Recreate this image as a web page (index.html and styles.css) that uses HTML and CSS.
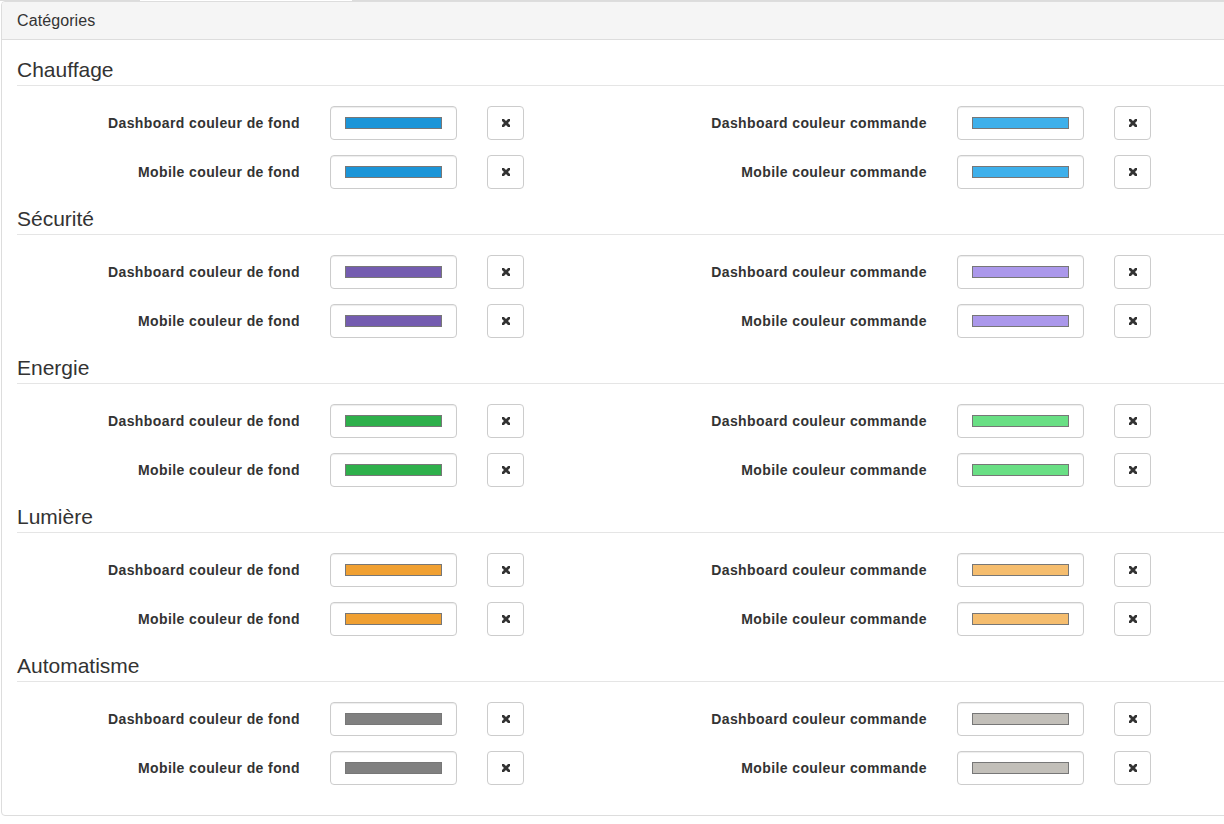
FILE: index.html
```html
<!DOCTYPE html>
<html lang="fr">
<head>
<meta charset="utf-8">
<title>Catégories</title>
<link rel="stylesheet" href="styles.css">
</head>
<body>
<div class="topbar"><span class="tab"></span></div>
<div class="panel">
  <div class="panel-heading">Catégories</div>
  <div class="panel-body">

    <section class="cat">
      <div class="legend">Chauffage</div>
      <div class="grid">
        <label class="lbl">Dashboard couleur de fond</label>
        <div class="cell"><span class="color"><span class="swatch" style="background:#1b95d8"></span></span></div>
        <div class="cell"><button class="btn"><svg viewBox="0 0 8 8" width="8" height="8"><path d="M1 1L7 7M7 1L1 7"/></svg></button></div>
        <label class="lbl">Dashboard couleur commande</label>
        <div class="cell"><span class="color"><span class="swatch" style="background:#3eb0eb"></span></span></div>
        <div class="cell"><button class="btn"><svg viewBox="0 0 8 8" width="8" height="8"><path d="M1 1L7 7M7 1L1 7"/></svg></button></div>
        <label class="lbl">Mobile couleur de fond</label>
        <div class="cell"><span class="color"><span class="swatch" style="background:#1b95d8"></span></span></div>
        <div class="cell"><button class="btn"><svg viewBox="0 0 8 8" width="8" height="8"><path d="M1 1L7 7M7 1L1 7"/></svg></button></div>
        <label class="lbl">Mobile couleur commande</label>
        <div class="cell"><span class="color"><span class="swatch" style="background:#3eb0eb"></span></span></div>
        <div class="cell"><button class="btn"><svg viewBox="0 0 8 8" width="8" height="8"><path d="M1 1L7 7M7 1L1 7"/></svg></button></div>
      </div>
    </section>

    <section class="cat">
      <div class="legend">Sécurité</div>
      <div class="grid">
        <label class="lbl">Dashboard couleur de fond</label>
        <div class="cell"><span class="color"><span class="swatch" style="background:#745cb0"></span></span></div>
        <div class="cell"><button class="btn"><svg viewBox="0 0 8 8" width="8" height="8"><path d="M1 1L7 7M7 1L1 7"/></svg></button></div>
        <label class="lbl">Dashboard couleur commande</label>
        <div class="cell"><span class="color"><span class="swatch" style="background:#ab98eb"></span></span></div>
        <div class="cell"><button class="btn"><svg viewBox="0 0 8 8" width="8" height="8"><path d="M1 1L7 7M7 1L1 7"/></svg></button></div>
        <label class="lbl">Mobile couleur de fond</label>
        <div class="cell"><span class="color"><span class="swatch" style="background:#745cb0"></span></span></div>
        <div class="cell"><button class="btn"><svg viewBox="0 0 8 8" width="8" height="8"><path d="M1 1L7 7M7 1L1 7"/></svg></button></div>
        <label class="lbl">Mobile couleur commande</label>
        <div class="cell"><span class="color"><span class="swatch" style="background:#ab98eb"></span></span></div>
        <div class="cell"><button class="btn"><svg viewBox="0 0 8 8" width="8" height="8"><path d="M1 1L7 7M7 1L1 7"/></svg></button></div>
      </div>
    </section>

    <section class="cat">
      <div class="legend">Energie</div>
      <div class="grid">
        <label class="lbl">Dashboard couleur de fond</label>
        <div class="cell"><span class="color"><span class="swatch" style="background:#2eb04b"></span></span></div>
        <div class="cell"><button class="btn"><svg viewBox="0 0 8 8" width="8" height="8"><path d="M1 1L7 7M7 1L1 7"/></svg></button></div>
        <label class="lbl">Dashboard couleur commande</label>
        <div class="cell"><span class="color"><span class="swatch" style="background:#69df84"></span></span></div>
        <div class="cell"><button class="btn"><svg viewBox="0 0 8 8" width="8" height="8"><path d="M1 1L7 7M7 1L1 7"/></svg></button></div>
        <label class="lbl">Mobile couleur de fond</label>
        <div class="cell"><span class="color"><span class="swatch" style="background:#2eb04b"></span></span></div>
        <div class="cell"><button class="btn"><svg viewBox="0 0 8 8" width="8" height="8"><path d="M1 1L7 7M7 1L1 7"/></svg></button></div>
        <label class="lbl">Mobile couleur commande</label>
        <div class="cell"><span class="color"><span class="swatch" style="background:#69df84"></span></span></div>
        <div class="cell"><button class="btn"><svg viewBox="0 0 8 8" width="8" height="8"><path d="M1 1L7 7M7 1L1 7"/></svg></button></div>
      </div>
    </section>

    <section class="cat">
      <div class="legend">Lumière</div>
      <div class="grid">
        <label class="lbl">Dashboard couleur de fond</label>
        <div class="cell"><span class="color"><span class="swatch" style="background:#f0a032"></span></span></div>
        <div class="cell"><button class="btn"><svg viewBox="0 0 8 8" width="8" height="8"><path d="M1 1L7 7M7 1L1 7"/></svg></button></div>
        <label class="lbl">Dashboard couleur commande</label>
        <div class="cell"><span class="color"><span class="swatch" style="background:#f5bd6e"></span></span></div>
        <div class="cell"><button class="btn"><svg viewBox="0 0 8 8" width="8" height="8"><path d="M1 1L7 7M7 1L1 7"/></svg></button></div>
        <label class="lbl">Mobile couleur de fond</label>
        <div class="cell"><span class="color"><span class="swatch" style="background:#f0a032"></span></span></div>
        <div class="cell"><button class="btn"><svg viewBox="0 0 8 8" width="8" height="8"><path d="M1 1L7 7M7 1L1 7"/></svg></button></div>
        <label class="lbl">Mobile couleur commande</label>
        <div class="cell"><span class="color"><span class="swatch" style="background:#f5bd6e"></span></span></div>
        <div class="cell"><button class="btn"><svg viewBox="0 0 8 8" width="8" height="8"><path d="M1 1L7 7M7 1L1 7"/></svg></button></div>
      </div>
    </section>

    <section class="cat">
      <div class="legend">Automatisme</div>
      <div class="grid">
        <label class="lbl">Dashboard couleur de fond</label>
        <div class="cell"><span class="color"><span class="swatch" style="background:#808080"></span></span></div>
        <div class="cell"><button class="btn"><svg viewBox="0 0 8 8" width="8" height="8"><path d="M1 1L7 7M7 1L1 7"/></svg></button></div>
        <label class="lbl">Dashboard couleur commande</label>
        <div class="cell"><span class="color"><span class="swatch" style="background:#c2bfb9"></span></span></div>
        <div class="cell"><button class="btn"><svg viewBox="0 0 8 8" width="8" height="8"><path d="M1 1L7 7M7 1L1 7"/></svg></button></div>
        <label class="lbl">Mobile couleur de fond</label>
        <div class="cell"><span class="color"><span class="swatch" style="background:#808080"></span></span></div>
        <div class="cell"><button class="btn"><svg viewBox="0 0 8 8" width="8" height="8"><path d="M1 1L7 7M7 1L1 7"/></svg></button></div>
        <label class="lbl">Mobile couleur commande</label>
        <div class="cell"><span class="color"><span class="swatch" style="background:#c2bfb9"></span></span></div>
        <div class="cell"><button class="btn"><svg viewBox="0 0 8 8" width="8" height="8"><path d="M1 1L7 7M7 1L1 7"/></svg></button></div>
      </div>
    </section>

  </div>
</div>
</body>
</html>
```

FILE: styles.css
```css
* { box-sizing: border-box; }

html { overflow: hidden; background: #fff; }

body {
  margin: 0;
  font-family: "Liberation Sans", Arial, Helvetica, sans-serif;
  color: #333;
  background: #fff;
}

.topbar {
  height: 1px;
  background: #dcdcdc;
  display: flex;
}

.topbar .tab {
  margin-left: 140px;
  width: 212px;
  height: 1px;
  background: #fff;
}

.panel {
  margin-left: 1px;
  width: 1286px;
  border: 1px solid #ddd;
  border-radius: 4px;
  background: #fff;
}

.panel-heading {
  background: #f5f5f5;
  border-bottom: 1px solid #ddd;
  border-radius: 3px 3px 0 0;
  padding: 8px 15px;
  height: 38px;
  font-size: 16px;
  line-height: 21px;
  letter-spacing: 0.1px;
  color: #333;
}

.panel-body {
  padding: 15px;
}

.legend {
  font-size: 21px;
  line-height: 30px;
  color: #333;
  border-bottom: 1px solid #e5e5e5;
  margin-bottom: 20px;
}

.grid {
  display: grid;
  grid-template-columns: 313px 157px 157px 313px 157px 157px;
  grid-auto-rows: 34px;
  row-gap: 15px;
  margin: 0 -15px 15px;
}

.lbl {
  padding: 7px 15px 0;
  text-align: right;
  font-weight: bold;
  font-size: 14px;
  line-height: 20px;
  letter-spacing: 0.4px;
  color: #333;
  white-space: nowrap;
}

.cell {
  padding: 0 15px;
}

.color {
  display: block;
  width: 127px;
  height: 34px;
  border: 1px solid #ccc;
  border-radius: 4px;
  padding: 10px 14px;
  background: #fff;
  box-shadow: inset 0 1px 1px rgba(0, 0, 0, 0.075);
}

.swatch {
  display: block;
  height: 12px;
  border: 1px solid #777;
}

.btn {
  display: flex;
  align-items: center;
  justify-content: center;
  width: 37px;
  height: 34px;
  padding: 0;
  border: 1px solid #ccc;
  border-radius: 4px;
  background: #fff;
  cursor: pointer;
}

.btn svg {
  display: block;
}

.btn svg path {
  stroke: #333;
  stroke-width: 2.8;
  stroke-linecap: square;
  fill: none;
}
```
